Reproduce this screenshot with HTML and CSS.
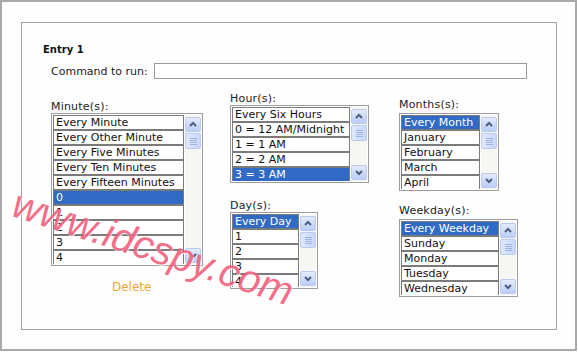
FILE: index.html
```html
<!DOCTYPE html>
<html>
<head>
<meta charset="utf-8">
<link rel="stylesheet" href="styles.css">
</head>
<body>
<div class="frame">
  <div class="panel">
    <div class="entry-title">Entry 1</div>
    <div class="command-row">
      <span class="command-label">Command to run:</span>
      <div class="command-input"></div>
    </div>
    <div class="columns">
      <div class="col col-minute">
        <div class="field-label">Minute(s):</div>
        <div class="listbox listbox-minute">
          <div class="options">
            <div class="option">Every Minute</div>
            <div class="option">Every Other Minute</div>
            <div class="option">Every Five Minutes</div>
            <div class="option">Every Ten Minutes</div>
            <div class="option">Every Fifteen Minutes</div>
            <div class="option selected">0</div>
            <div class="option">1</div>
            <div class="option">2</div>
            <div class="option">3</div>
            <div class="option">4</div>
          </div>
          <div class="scrollbar">
            <div class="sb-btn"><svg width="14" height="13" viewBox="0 0 14 13"><polyline points="4,8 7,5 10,8" fill="none" stroke="#4d6185" stroke-width="2"/></svg></div>
            <div class="sb-thumb"><span></span><span></span><span></span><span></span></div>
            <div class="sb-track"></div>
            <div class="sb-btn"><svg width="14" height="13" viewBox="0 0 14 13"><polyline points="4,5 7,8 10,5" fill="none" stroke="#4d6185" stroke-width="2"/></svg></div>
          </div>
        </div>
        <div class="delete">Delete</div>
      </div>

      <div class="col col-hour">
        <div class="field-label">Hour(s):</div>
        <div class="listbox listbox-hour">
          <div class="options">
            <div class="option">Every Six Hours</div>
            <div class="option">0 = 12 AM/Midnight</div>
            <div class="option">1 = 1 AM</div>
            <div class="option">2 = 2 AM</div>
            <div class="option selected">3 = 3 AM</div>
          </div>
          <div class="scrollbar">
            <div class="sb-btn"><svg width="14" height="13" viewBox="0 0 14 13"><polyline points="4,8 7,5 10,8" fill="none" stroke="#4d6185" stroke-width="2"/></svg></div>
            <div class="sb-thumb"><span></span><span></span><span></span><span></span></div>
            <div class="sb-track"></div>
            <div class="sb-btn"><svg width="14" height="13" viewBox="0 0 14 13"><polyline points="4,5 7,8 10,5" fill="none" stroke="#4d6185" stroke-width="2"/></svg></div>
          </div>
        </div>
        <div class="field-label label-day">Day(s):</div>
        <div class="listbox listbox-day">
          <div class="options">
            <div class="option selected">Every Day</div>
            <div class="option">1</div>
            <div class="option">2</div>
            <div class="option">3</div>
            <div class="option">4</div>
          </div>
          <div class="scrollbar">
            <div class="sb-btn"><svg width="14" height="13" viewBox="0 0 14 13"><polyline points="4,8 7,5 10,8" fill="none" stroke="#4d6185" stroke-width="2"/></svg></div>
            <div class="sb-thumb"><span></span><span></span><span></span><span></span></div>
            <div class="sb-track"></div>
            <div class="sb-btn"><svg width="14" height="13" viewBox="0 0 14 13"><polyline points="4,5 7,8 10,5" fill="none" stroke="#4d6185" stroke-width="2"/></svg></div>
          </div>
        </div>
      </div>

      <div class="col col-month">
        <div class="field-label">Months(s):</div>
        <div class="listbox listbox-month">
          <div class="options">
            <div class="option selected">Every Month</div>
            <div class="option">January</div>
            <div class="option">February</div>
            <div class="option">March</div>
            <div class="option">April</div>
          </div>
          <div class="scrollbar">
            <div class="sb-btn"><svg width="14" height="13" viewBox="0 0 14 13"><polyline points="4,8 7,5 10,8" fill="none" stroke="#4d6185" stroke-width="2"/></svg></div>
            <div class="sb-thumb"><span></span><span></span><span></span><span></span></div>
            <div class="sb-track"></div>
            <div class="sb-btn"><svg width="14" height="13" viewBox="0 0 14 13"><polyline points="4,5 7,8 10,5" fill="none" stroke="#4d6185" stroke-width="2"/></svg></div>
          </div>
        </div>
        <div class="field-label label-weekday">Weekday(s):</div>
        <div class="listbox listbox-weekday">
          <div class="options">
            <div class="option selected">Every Weekday</div>
            <div class="option">Sunday</div>
            <div class="option">Monday</div>
            <div class="option">Tuesday</div>
            <div class="option">Wednesday</div>
          </div>
          <div class="scrollbar">
            <div class="sb-btn"><svg width="14" height="13" viewBox="0 0 14 13"><polyline points="4,8 7,5 10,8" fill="none" stroke="#4d6185" stroke-width="2"/></svg></div>
            <div class="sb-thumb"><span></span><span></span><span></span><span></span></div>
            <div class="sb-track"></div>
            <div class="sb-btn"><svg width="14" height="13" viewBox="0 0 14 13"><polyline points="4,5 7,8 10,5" fill="none" stroke="#4d6185" stroke-width="2"/></svg></div>
          </div>
        </div>
      </div>
    </div>
  </div>
  <div class="watermark">www.idcspy.com</div>
</div>
</body>
</html>
```

FILE: styles.css
```css
* { box-sizing: border-box; }
html, body {
  margin: 0;
  padding: 0;
  background: #ffffff;
}
body {
  font-family: "DejaVu Sans", Verdana, sans-serif;
  font-size: 11px;
  color: #111;
}
.frame {
  position: relative;
  width: 577px;
  height: 351px;
  border: 2px solid #a9a9a9;
  background: #fefefe;
  padding: 20px 0 0 19px;
  overflow: hidden;
}
.panel {
  width: 536px;
  height: 308px;
  border: 1px solid #a3a3a3;
  padding: 21px 0 0 21px;
  background: #fefefe;
}
.entry-title {
  font-weight: bold;
  font-size: 10px;
  line-height: 12px;
  color: #111;
}
.command-row {
  display: flex;
  align-items: center;
  margin-top: 7px;
  padding-left: 8px;
  height: 16px;
}
.command-label {
  line-height: 13px;
  color: #222;
  width: 103px;
}
.command-input {
  width: 373px;
  height: 16px;
  border: 1px solid #9a9a9a;
  background: #fff;
}
.columns {
  display: flex;
  align-items: flex-start;
  padding-left: 8px;
}
.col {
  display: flex;
  flex-direction: column;
}
.col-minute { width: 152px; margin-top: 21px; }
.col-hour { width: 139px; margin-left: 27px; margin-top: 13px; }
.col-month { width: 119px; margin-left: 30px; margin-top: 19px; }
.field-label {
  line-height: 13px;
  color: #222;
  letter-spacing: 0.2px;
}
.label-day { margin-top: 16px; }
.label-weekday { margin-top: 13px; }
.col-month .field-label { margin-bottom: 2px; }
.listbox {
  display: flex;
  border: 1px solid #9d9d9d;
  padding: 1px;
  background: #fff;
  overflow: hidden;
}
.listbox-minute { width: 152px; height: 153px; }
.listbox-hour { width: 139px; height: 78px; }
.listbox-day { width: 88px; height: 77px; }
.listbox-month { width: 100px; height: 78px; }
.listbox-weekday { width: 119px; height: 78px; }
.options {
  flex: 1;
  overflow: hidden;
}
.option {
  height: 15px;
  border: 1px solid #7b7b7b;
  padding-left: 2px;
  line-height: 13px;
  white-space: nowrap;
  overflow: hidden;
  background: #fff;
  color: #111;
}
.option.selected {
  background: #316ac5;
  color: #fff;
}
.scrollbar {
  width: 16px;
  margin-left: 1px;
  display: flex;
  flex-direction: column;
  padding: 2px 0 1px;
  background: #f6f6f2;
}
.sb-btn {
  height: 15px;
  border: 1px solid #b9c9ef;
  border-radius: 2px;
  background: linear-gradient(#e3ebfd, #bccdf6);
  display: flex;
  align-items: center;
  justify-content: center;
}
.sb-thumb {
  height: 16px;
  margin-top: 1px;
  border: 1px solid #bccbf0;
  border-radius: 2px;
  background: linear-gradient(90deg, #dfe8fd, #c9d8fa);
  display: flex;
  flex-direction: column;
  align-items: center;
  justify-content: center;
  gap: 1px;
}
.sb-thumb span {
  width: 7px;
  height: 1px;
  background: #9fb4e6;
}
.sb-track { flex: 1; }
.delete {
  margin-top: 14px;
  padding-left: 61px;
  font-size: 12px;
  line-height: 14px;
  color: #f0a830;
}
.watermark {
  position: absolute;
  left: 12px;
  top: 180px;
  font-family: "Liberation Sans", Arial, sans-serif;
  font-style: italic;
  font-size: 40px;
  line-height: 40px;
  color: rgba(240, 84, 116, 0.85);
  transform-origin: 0 50%;
  transform: rotate(18deg);
  white-space: nowrap;
  text-shadow: 1px 1px 0 rgba(255,255,255,0.7);
}
```
